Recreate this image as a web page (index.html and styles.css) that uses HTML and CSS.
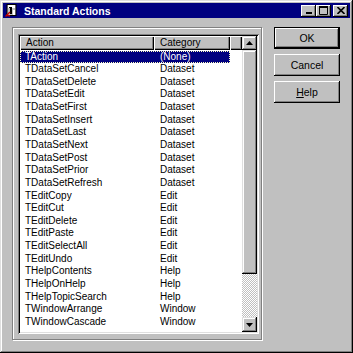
FILE: index.html
```html
<!DOCTYPE html>
<html lang="en">
<head>
    <meta charset="UTF-8">
    <meta name="viewport" content="width=device-width, initial-scale=1.0">
    <title>Standard Actions</title>
    <link rel="stylesheet" href="styles.css">
</head>
<body>
    <div class="window">
        <div class="titlebar">
            <svg class="app-icon" width="13" height="13" viewBox="0 0 13 13">
                <rect x="2" y="0.5" width="9" height="11" fill="#c0c0c0" stroke="#000"/>
                <rect x="3" y="1" width="7" height="3" fill="#fff"/>
                <path d="M5 3h2v7H5z" fill="#000"/>
                <path d="M4 4l1-1" stroke="#000"/>
                <path d="M0.5 12.5L5 8M1 11l4 1" stroke="#c00000" stroke-width="1.4" fill="none"/>
                <path d="M8 6h2v5H8z" fill="#fff"/>
            </svg>
            <span class="title">Standard Actions</span>
            <div class="caption-buttons">
                <div class="cap-btn">
                    <svg width="8" height="7" viewBox="0 0 8 7"><rect x="1" y="5" width="6" height="2" fill="#000"/></svg>
                </div>
                <div class="cap-btn">
                    <svg width="9" height="9" viewBox="0 0 9 9"><path d="M0.5 1.5h8v7h-8z" fill="none" stroke="#000"/><rect x="0" y="0" width="9" height="2" fill="#000"/></svg>
                </div>
                <div class="cap-btn close">
                    <svg width="8" height="7" viewBox="0 0 8 7"><path d="M0.5 0L7.5 7M7.5 0L0.5 7" stroke="#000" stroke-width="1.6"/></svg>
                </div>
            </div>
        </div>

        <div class="client">
            <div class="group">
                <div class="listview">
                    <div class="list">
                        <div class="header">
                            <div class="hcol col-action">Action</div>
                            <div class="hcol col-cat">Category</div>
                            <div class="hcol col-fill"></div>
                        </div>
                        <div class="rows">
                            <div class="row selected"><span>TAction</span><span>(None)</span></div>
                            <div class="row"><span>TDataSetCancel</span><span>Dataset</span></div>
                            <div class="row"><span>TDataSetDelete</span><span>Dataset</span></div>
                            <div class="row"><span>TDataSetEdit</span><span>Dataset</span></div>
                            <div class="row"><span>TDataSetFirst</span><span>Dataset</span></div>
                            <div class="row"><span>TDataSetInsert</span><span>Dataset</span></div>
                            <div class="row"><span>TDataSetLast</span><span>Dataset</span></div>
                            <div class="row"><span>TDataSetNext</span><span>Dataset</span></div>
                            <div class="row"><span>TDataSetPost</span><span>Dataset</span></div>
                            <div class="row"><span>TDataSetPrior</span><span>Dataset</span></div>
                            <div class="row"><span>TDataSetRefresh</span><span>Dataset</span></div>
                            <div class="row"><span>TEditCopy</span><span>Edit</span></div>
                            <div class="row"><span>TEditCut</span><span>Edit</span></div>
                            <div class="row"><span>TEditDelete</span><span>Edit</span></div>
                            <div class="row"><span>TEditPaste</span><span>Edit</span></div>
                            <div class="row"><span>TEditSelectAll</span><span>Edit</span></div>
                            <div class="row"><span>TEditUndo</span><span>Edit</span></div>
                            <div class="row"><span>THelpContents</span><span>Help</span></div>
                            <div class="row"><span>THelpOnHelp</span><span>Help</span></div>
                            <div class="row"><span>THelpTopicSearch</span><span>Help</span></div>
                            <div class="row"><span>TWindowArrange</span><span>Window</span></div>
                            <div class="row"><span>TWindowCascade</span><span>Window</span></div>
                        </div>
                    </div>
                    <div class="scrollbar">
                        <div class="sb-btn up">
                            <svg width="7" height="4" viewBox="0 0 7 4"><path d="M3.5 0L7 4H0z" fill="#000"/></svg>
                        </div>
                        <div class="sb-thumb"></div>
                        <div class="sb-track"></div>
                        <div class="sb-btn down">
                            <svg width="7" height="4" viewBox="0 0 7 4"><path d="M0 0h7L3.5 4z" fill="#000"/></svg>
                        </div>
                    </div>
                </div>
            </div>

            <div class="buttons">
                <button class="btn default">OK</button>
                <button class="btn">Cancel</button>
                <button class="btn"><u>H</u>elp</button>
            </div>
        </div>
    </div>
</body>
</html>
```

FILE: styles.css
```css
body {
    margin: 0;
    background-color: #c0c0c0;
    font-family: "Liberation Sans", Arial, sans-serif;
}
.window {
    width: 353px;
    height: 353px;
    box-sizing: border-box;
    padding: 3px;
    background: #c0c0c0;
    box-shadow: inset -1px -1px #000, inset 1px 1px #dfdfdf,
                inset -2px -2px #808080, inset 2px 2px #fff;
    display: flex;
    flex-direction: column;
}
.titlebar {
    height: 15px;
    background: #000080;
    display: flex;
    align-items: center;
    padding: 0 2px 0 2px;
    flex-shrink: 0;
}
.app-icon {
    display: block;
    margin-right: 6px;
}
.title {
    color: #fff;
    font-weight: bold;
    font-size: 10.5px;
    flex-grow: 1;
}
.caption-buttons {
    display: flex;
    align-items: center;
}
.cap-btn {
    width: 15px;
    height: 12px;
    background: #c0c0c0;
    box-shadow: inset -1px -1px #000, inset 1px 1px #fff, inset -2px -2px #808080;
    display: flex;
    align-items: center;
    justify-content: center;
}
.cap-btn.close {
    margin-left: 2px;
}
.client {
    flex-grow: 1;
    display: flex;
    gap: 12px;
    padding: 9px 0 0 9px;
}
.group {
    width: 250px;
    height: 313px;
    box-sizing: border-box;
    border: 1px solid #808080;
    box-shadow: inset 1px 1px #fff, 1px 1px #fff;
    padding: 6px 2px 5px 5px;
    display: flex;
}
.listview {
    flex-grow: 1;
    display: flex;
    padding: 2px;
    background: #fff;
    box-shadow: inset 1px 1px #808080, inset -1px -1px #fff,
                inset 2px 2px #000, inset -2px -2px #dfdfdf;
}
.list {
    flex-grow: 1;
    background: #fff;
    font-size: 10px;
    color: #000;
}
.header {
    display: flex;
    height: 14px;
}
.hcol {
    background: #c0c0c0;
    box-shadow: inset 1px 1px #fff, inset -1px -1px #000, inset -2px -2px #808080;
    line-height: 14px;
    padding-left: 6px;
    box-sizing: border-box;
}
.col-action {
    width: 134px;
}
.col-cat {
    width: 76px;
}
.col-fill {
    flex-grow: 1;
}
.rows {
    padding-top: 0.5px;
}
.row {
    display: grid;
    grid-template-columns: 134px 76px;
    width: 210px;
    height: 12.65px;
    line-height: 12.65px;
}
.row span {
    padding-left: 5px;
    white-space: nowrap;
}
.row span + span {
    padding-left: 6px;
}
.row.selected {
    background: #000080;
    color: #fff;
    outline: 1px dotted #ffffc0;
    outline-offset: -1px;
}
.scrollbar {
    width: 15px;
    display: flex;
    flex-direction: column;
}
.sb-btn, .sb-thumb {
    background: #c0c0c0;
    box-shadow: inset -1px -1px #000, inset 1px 1px #dfdfdf,
                inset -2px -2px #808080, inset 2px 2px #fff;
}
.sb-btn {
    height: 14px;
    display: flex;
    align-items: center;
    justify-content: center;
}
.sb-btn.down {
    height: 15px;
}
.sb-thumb {
    height: 224px;
}
.sb-track {
    flex-grow: 1;
    background: repeating-conic-gradient(#c0c0c0 0 25%, #fff 0 50%) 0 0 / 2px 2px;
}
.buttons {
    display: flex;
    flex-direction: column;
    gap: 5px;
    width: 66px;
}
.btn {
    height: 22px;
    padding: 0;
    border: none;
    background: #c0c0c0;
    font-family: "Liberation Sans", Arial, sans-serif;
    font-size: 10.5px;
    color: #000;
    box-shadow: inset -1px -1px #000, inset 1px 1px #fff, inset -2px -2px #808080;
}
.btn.default {
    box-shadow: inset 0 0 0 1px #000, inset -2px -2px #000,
                inset 2px 2px #fff, inset -3px -3px #808080;
}
```
